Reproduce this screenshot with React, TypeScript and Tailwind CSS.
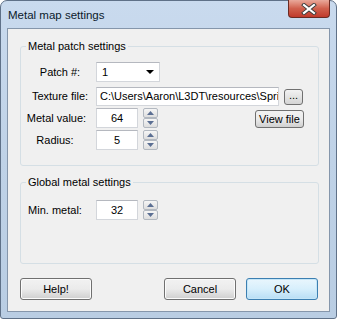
function Spinner() {
  return (
    <div className="flex flex-col w-[15px] h-[20px] gap-[0px]">
      <div className="flex-1 flex items-center justify-center border border-[#b2b8c0] rounded-[2px] bg-gradient-to-b from-[#f6f6f6] to-[#dedede]">
        <svg width="7" height="4" viewBox="0 0 7 4">
          <path d="M0 4 L3.5 0 L7 4 Z" fill="#5b6f93" />
        </svg>
      </div>
      <div className="flex-1 flex items-center justify-center border border-[#b2b8c0] rounded-[2px] bg-gradient-to-b from-[#f6f6f6] to-[#dedede]">
        <svg width="7" height="4" viewBox="0 0 7 4">
          <path d="M0 0 L7 0 L3.5 4 Z" fill="#5b6f93" />
        </svg>
      </div>
    </div>
  );
}

function NumBox({ value }: { value: string }) {
  return (
    <div className="w-[42px] h-[20px] bg-white border border-[#d3d6db] border-t-[#b5b8bf] flex items-center justify-center">
      {value}
    </div>
  );
}

function Button({ label, def }: { label: string; def?: boolean }) {
  return (
    <div
      className={
        def
          ? "w-[72px] h-[22px] rounded-[3px] border border-[#3c7fb1] bg-gradient-to-b from-[#e9f6fd] via-[#d7effc] to-[#b8def5] flex items-center justify-center shadow-[inset_0_0_0_1px_#c5e6f8]"
          : "w-[72px] h-[22px] rounded-[3px] border border-[#707070] bg-gradient-to-b from-[#f2f2f2] via-[#ebebeb] to-[#cfcfcf] flex items-center justify-center shadow-[inset_0_0_0_1px_#fbfbfb]"
      }
    >
      {label}
    </div>
  );
}

export default function App() {
  return (
    <div className="w-[337px] h-[319px] font-['Liberation_Sans',Arial,sans-serif] text-[11px] text-black">
      <div className="w-[337px] h-[319px] rounded-t-[7px] rounded-b-[3px] border border-[#5f7188] bg-gradient-to-b from-[#c9daee] via-[#bfd2e7] to-[#b9cde3] flex flex-col px-[6px] pb-[6px]">
        {/* title bar */}
        <div className="h-[27px] flex items-start justify-between">
          <div className="pt-[7px] pl-[1px] text-[11.5px] leading-[14px] text-[#0b1a2b]">Metal map settings</div>
          <div className="w-[42px] h-[18px] -mt-[1px] rounded-b-[4px] border border-[#6b2a22] border-t-0 bg-gradient-to-b from-[#e9a99b] via-[#d0604d] to-[#c0392b] flex items-center justify-center">
            <svg width="16" height="12" viewBox="0 0 16 12">
              <path d="M3 2 L13 10 M13 2 L3 10" stroke="#3b3b3b" strokeWidth="4" strokeLinecap="square" />
              <path d="M3 2 L13 10 M13 2 L3 10" stroke="#ffffff" strokeWidth="2.2" strokeLinecap="square" />
            </svg>
          </div>
        </div>

        {/* client area */}
        <div className="flex-1 border border-[#8596ab] bg-[#f0f0f0] flex flex-col pl-[12px] pr-[10px]">
          <fieldset className="mt-[10px] h-[127px] border border-[#d5dfe5] rounded-[3px]">
            <legend className="ml-[5px] px-[2px] leading-[14px]">Metal patch settings</legend>
            <div className="pt-[9px] flex flex-col">
              <div className="flex items-center h-[20px]">
                <div className="w-[75px] text-center pl-[3px]">Patch #:</div>
                <div className="w-[64px] h-[20px] bg-white border border-[#d3d6db] border-t-[#b5b8bf] flex items-center justify-between pl-[5px] pr-[5px]">
                  <span>1</span>
                  <svg width="8" height="4" viewBox="0 0 8 4">
                    <path d="M0 0 L8 0 L4 4 Z" fill="#000" />
                  </svg>
                </div>
              </div>
              <div className="flex items-center h-[19px] mt-[5px]">
                <div className="w-[75px] text-center pl-[3px]">Texture file:</div>
                <div className="w-[183px] h-[19px] bg-white border border-[#d3d6db] border-t-[#b5b8bf] flex items-center pl-[3px] overflow-hidden whitespace-nowrap">
                  C:\Users\Aaron\L3DT\resources\Spri
                </div>
                <div className="ml-[5px] w-[19px] h-[16px] rounded-[3px] border border-[#707070] bg-gradient-to-b from-[#f2f2f2] to-[#d4d4d4] flex items-center justify-center leading-[10px] pb-[3px]">
                  ...
                </div>
              </div>
              <div className="flex items-end h-[20px] mt-[2px]">
                <div className="w-[75px] text-center pr-[4px] self-center">Metal value:</div>
                <NumBox value="64" />
                <div className="ml-[5px]">
                  <Spinner />
                </div>
                <div className="ml-auto mr-[14px] w-[49px] h-[18px] rounded-[3px] border border-[#707070] bg-gradient-to-b from-[#f2f2f2] via-[#ebebeb] to-[#d0d0d0] flex items-center justify-center">
                  View file
                </div>
              </div>
              <div className="flex items-center h-[20px] mt-[2px]">
                <div className="w-[75px] text-center pr-[7px]">Radius:</div>
                <NumBox value="5" />
                <div className="ml-[5px]">
                  <Spinner />
                </div>
              </div>
            </div>
          </fieldset>

          <fieldset className="mt-[9px] h-[89px] border border-[#d5dfe5] rounded-[3px]">
            <legend className="ml-[5px] px-[2px] leading-[14px]">Global metal settings</legend>
            <div className="pt-[11px] flex items-center h-[20px] box-content">
              <div className="w-[75px] text-center pr-[7px]">Min. metal:</div>
              <NumBox value="32" />
              <div className="ml-[5px]">
                <Spinner />
              </div>
            </div>
          </fieldset>

          <div className="mt-[14px] flex items-center">
            <Button label="Help!" />
            <div className="ml-auto flex gap-[10px] mr-[1px]">
              <Button label="Cancel" />
              <Button label="OK" def />
            </div>
          </div>
        </div>
      </div>
    </div>
  );
}
